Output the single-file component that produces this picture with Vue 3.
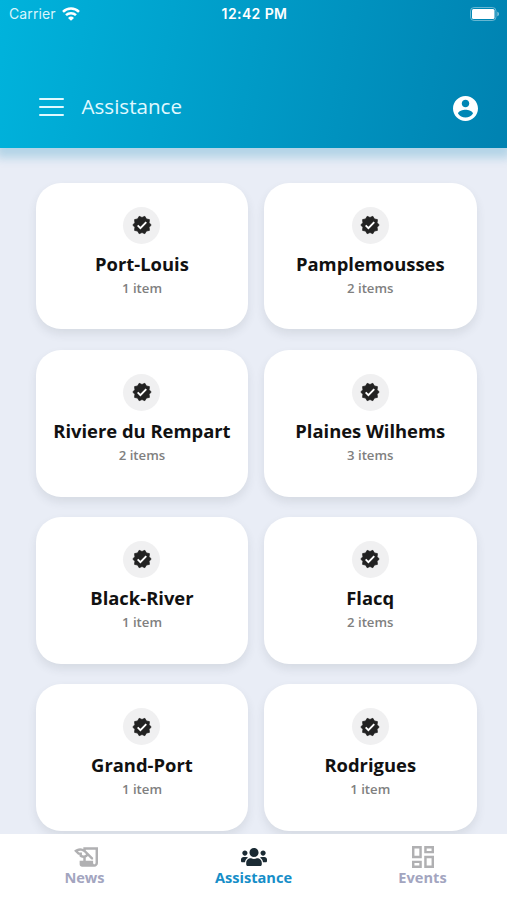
<template>
  <div class="screen">
    <header class="header">
      <div class="status-bar">
        <div class="carrier">
          <span>Carrier</span>
          <svg class="wifi" viewBox="0 0 18 14">
            <path d="M1 4.900a11.400 11.400 0 0 1 16 0" />
            <path d="M4 8.200a7.200 7.200 0 0 1 10 0" />
            <path class="wifi-dot" d="M9 13.800 6 10.900a4.300 4.300 0 0 1 6 0z" />
          </svg>
        </div>
        <span class="clock">12:42 PM</span>
        <svg class="battery" viewBox="0 0 30 14">
          <rect class="battery-case" x="0.5" y="0.5" width="25.5" height="13" rx="3.6" />
          <rect x="2" y="2" width="22.5" height="10" rx="1.5" />
          <path class="battery-cap" d="M27.300 4.800v4.400c1-.3 1.700-1.100 1.700-2.200s-.7-1.900-1.700-2.200z" />
        </svg>
      </div>

      <div class="toolbar">
        <button class="menu-button" aria-label="Menu">
          <span></span>
          <span></span>
          <span></span>
        </button>
        <h1>Assistance</h1>
        <svg class="account" viewBox="2 2 20 20">
          <path d="M12 2C6.480 2 2 6.480 2 12s4.480 10 10 10 10-4.480 10-10S17.520 2 12 2zm0 3c1.660 0 3 1.340 3 3s-1.340 3-3 3-3-1.340-3-3 1.340-3 3-3zm0 14.200c-2.500 0-4.710-1.280-6-3.220.03-1.990 4-3.080 6-3.080 1.990 0 5.970 1.090 6 3.080-1.290 1.940-3.500 3.220-6 3.220z" />
        </svg>
      </div>
    </header>

    <main class="content">
      <div class="grid">
        <div v-for="r in regions" :key="r.name" class="card">
          <div class="badge">
            <svg viewBox="0 0 24 24">
              <path class="seal" d="M23 12l-2.440-2.780.34-3.680-3.610-.82-1.890-3.180L12 3 8.600 1.540 6.710 4.720l-3.610.81.34 3.680L1 12l2.440 2.780-.34 3.690 3.610.82 1.890 3.180L12 21l3.400 1.460 1.890-3.180 3.610-.82-.34-3.680L23 12z" />
              <path class="check" d="M6.800 12.400l3.300 3.300 7-7.200" />
            </svg>
          </div>
          <h2>{{ r.name }}</h2>
          <p>{{ r.count }} {{ r.count === 1 ? 'item' : 'items' }}</p>
        </div>
      </div>
    </main>

    <nav class="tabs">
      <button
        v-for="t in tabs"
        :key="t.id"
        class="tab"
        :class="[t.id, { active: activeTab === t.id }]"
        @click="activeTab = t.id"
      >
        <svg :viewBox="t.viewBox">
          <path :d="t.path" />
        </svg>
        <span>{{ t.label }}</span>
      </button>
    </nav>
  </div>
</template>

<script setup>
import { ref } from 'vue'

const activeTab = ref('assistance')

const regions = [
  { name: 'Port-Louis', count: 1 },
  { name: 'Pamplemousses', count: 2 },
  { name: 'Riviere du Rempart', count: 2 },
  { name: 'Plaines Wilhems', count: 3 },
  { name: 'Black-River', count: 1 },
  { name: 'Flacq', count: 2 },
  { name: 'Grand-Port', count: 1 },
  { name: 'Rodrigues', count: 1 },
]

const tabs = [
  {
    id: 'news',
    label: 'News',
    viewBox: '1.4 4 19.6 16',
    path: 'M9 4v1.38c-.83-.33-1.72-.5-2.61-.5-1.79 0-3.58.68-4.95 2.05l3.33 3.33h1.11v1.11c.86.86 1.98 1.31 3.11 1.36V15H6v3c0 1.1.9 2 2 2h10c1.66 0 3-1.34 3-3V4H9zm-1.11 6.41V8.26H5.61L4.57 7.22a5.07 5.07 0 0 1 1.82-.34c1.34 0 2.59.52 3.54 1.46l1.41 1.41-.2.2a2.7 2.7 0 0 1-1.92.8c-.47 0-.93-.12-1.33-.34zM19 17c0 .55-.45 1-1 1s-1-.45-1-1v-2h-6v-2.59c.57-.23 1.1-.57 1.56-1.03l.2-.2L15.59 14H17v-1.41l-6-5.97V6h8v11z',
  },
  {
    id: 'assistance',
    label: 'Assistance',
    viewBox: '0 0 640 512',
    path: 'M96 224c35.300 0 64-28.700 64-64s-28.700-64-64-64-64 28.700-64 64 28.700 64 64 64zm448 0c35.300 0 64-28.700 64-64s-28.700-64-64-64-64 28.700-64 64 28.700 64 64 64zm32 32h-64c-17.600 0-33.500 7.100-45.100 18.600 40.300 22.100 68.900 62 75.100 109.400h66c17.700 0 32-14.300 32-32v-32c0-35.300-28.700-64-64-64zm-256 0c61.900 0 112-50.100 112-112S381.900 32 320 32 208 82.100 208 144s50.100 112 112 112zm76.800 32h-8.300c-20.800 10-43.900 16-68.500 16s-47.600-6-68.500-16h-8.300C179.600 288 128 339.600 128 403.200V432c0 26.500 21.500 48 48 48h288c26.500 0 48-21.500 48-48v-28.800c0-63.600-51.600-115.200-115.200-115.200zm-223.700-13.400C161.500 263.100 145.600 256 128 256H64c-35.300 0-64 28.700-64 64v32c0 17.700 14.300 32 32 32h65.900c6.300-47.400 34.900-87.300 75.200-109.400z',
  },
  {
    id: 'events',
    label: 'Events',
    viewBox: '3 3 18 18',
    path: 'M19 5v2h-4V5h4M9 5v6H5V5h4m10 8v6h-4v-6h4M9 17v2H5v-2h4M21 3h-8v6h8V3zM11 3H3v10h8V3zm10 8h-8v10h8V11zm-10 4H3v6h8v-6z',
  },
]
</script>

<style>
body {
  margin: 0;
}
</style>

<style scoped>
.screen {
  display: flex;
  flex-direction: column;
  height: 900px;
  overflow: hidden;
  background: #e9edf6;
  font-family: 'Open Sans', 'Noto Sans', sans-serif;
}

button {
  border: 0;
  padding: 0;
  background: none;
  font: inherit;
  cursor: pointer;
}

h1,
h2,
p {
  margin: 0;
}

.header {
  position: relative;
  z-index: 1;
  flex: none;
  height: 147.6px;
  color: #fff;
  background: linear-gradient(100deg, #00b3dc 0%, #0082b1 100%);
  box-shadow: 0 6px 9px 4px rgba(0, 130, 180, 0.23);
}

.status-bar {
  display: grid;
  grid-template-columns: 1fr auto 1fr;
  align-items: center;
  height: 27px;
  padding: 0 7px 0 9px;
  font-family: Inter, sans-serif;
  font-size: 14px;
}

.carrier {
  display: flex;
  align-items: center;
  gap: 6px;
  color: #d9f5fc;
  letter-spacing: 0.1px;
}

.wifi {
  width: 18px;
  height: 14px;
  fill: none;
  stroke: #fff;
  stroke-width: 2.5;
}

.wifi-dot {
  fill: #fff;
  stroke: none;
}

.clock {
  font-size: 14px;
  font-weight: 600;
  letter-spacing: 0.4px;
}

.battery {
  justify-self: end;
  width: 30px;
  height: 14px;
  fill: #fff;
}

.battery-case {
  fill: none;
  stroke: rgba(255, 255, 255, 0.4);
}

.battery-cap {
  fill: rgba(255, 255, 255, 0.5);
}

.toolbar {
  display: flex;
  align-items: center;
  height: 54px;
  margin-top: 53px;
  padding: 0 29px 0 38.5px;
}

.menu-button {
  display: flex;
  flex-direction: column;
  gap: 5.8px;
  width: 25px;
  margin-right: 18px;
}

.menu-button span {
  height: 2.4px;
  border-radius: 1px;
  background: #e0f9ff;
}

.toolbar h1 {
  flex: 1;
  padding-bottom: 3px;
  font-size: 20.6px;
  font-weight: 400;
  line-height: 28px;
  color: #e0f9ff;
}

.account {
  width: 25px;
  height: 25px;
  margin-top: 2px;
  fill: #fff;
}

.content {
  flex: 1;
  min-height: 0;
  padding: 35px 30.4px 0 35.6px;
}

.grid {
  display: grid;
  grid-template-columns: 1fr 1fr;
  gap: 20.4px 15.6px;
}

.card {
  display: flex;
  flex-direction: column;
  align-items: center;
  box-sizing: border-box;
  height: 146.8px;
  padding-top: 24px;
  border-radius: 25px;
  background: #fff;
  box-shadow: 0 5px 10px rgba(50, 55, 65, 0.1);
}

.badge {
  display: flex;
  align-items: center;
  justify-content: center;
  width: 37px;
  height: 37px;
  border-radius: 50%;
  background: #f0f0f1;
}

.badge svg {
  width: 20px;
  height: 20px;
}

.seal {
  fill: #222;
  stroke: #222;
  stroke-width: 0.9;
  stroke-linejoin: round;
}

.check {
  fill: none;
  stroke: #fff;
  stroke-width: 2.3;
}

.card h2 {
  margin-top: 7px;
  font-size: 18.4px;
  font-weight: 700;
  line-height: 26px;
  color: #111;
  white-space: nowrap;
}

.card p {
  margin-top: 1px;
  font-size: 13.2px;
  font-weight: 600;
  line-height: 20px;
  color: #808080;
}

.tabs {
  position: relative;
  z-index: 1;
  display: grid;
  grid-template-columns: repeat(3, 1fr);
  flex: none;
  height: 65.6px;
  background: #fff;
}

.tab {
  display: flex;
  flex-direction: column;
  align-items: center;
  justify-content: flex-start;
  padding-top: 11.6px;
  color: #a3a5bf;
}

.tab svg {
  width: 22px;
  height: 22px;
  fill: #b0b0b2;
}

.tab span {
  font-size: 14.6px;
  font-weight: 700;
  line-height: 18px;
}

.tab.news svg {
  width: 24px;
  height: 20px;
  margin: 1px 0 1px 2px;
}

.tab.assistance svg {
  width: 26px;
}

.tab.active {
  color: #168ec8;
}

.tab.active svg {
  fill: #1b2b34;
}
</style>
